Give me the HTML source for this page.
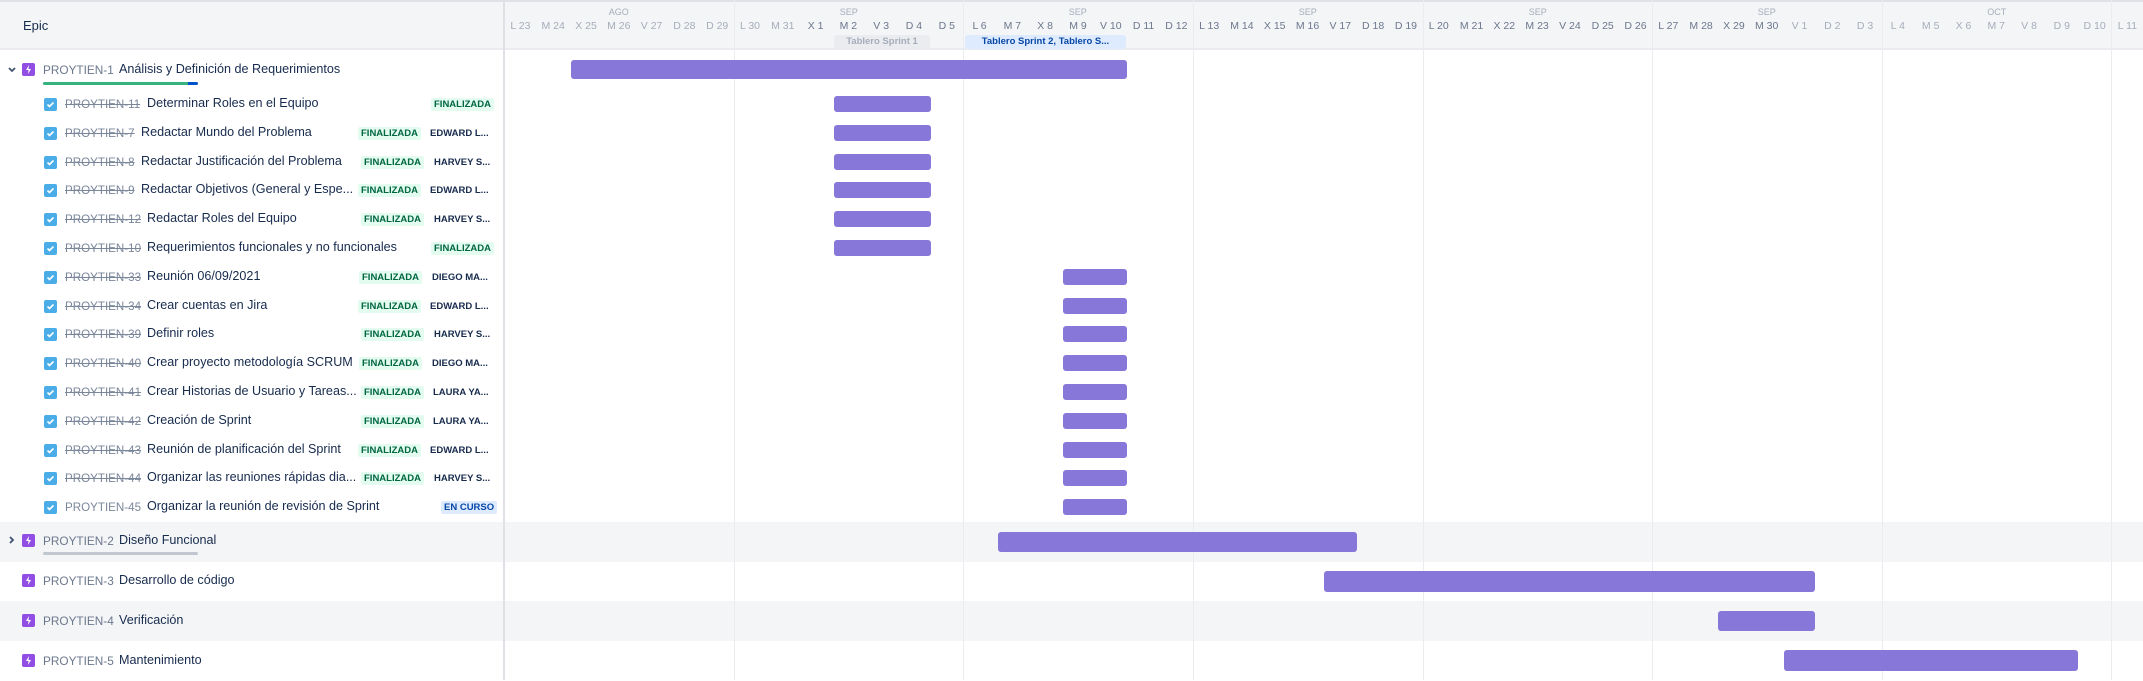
<!DOCTYPE html>
<html><head><meta charset="utf-8">
<style>
*{box-sizing:border-box;margin:0;padding:0}
body{width:2143px;height:680px;overflow:hidden;background:#fff;font-family:"Liberation Sans",sans-serif;color:#172b4d;position:relative}
.a{position:absolute}
.hdr{left:0;top:0;width:2143px;height:50px;background:#f4f5f7;border-top:2px solid #dfe1e6;border-bottom:2px solid #ebecf0}
.side{left:503px;top:0;width:2px;height:680px;background:#dfe1e6}
.vl{top:0;width:1px;height:680px;background:#ebecf0}
.grey{left:0;width:2143px;background:#f4f5f7}
.days{left:504px;top:20px;display:flex;font-size:10.5px;white-space:nowrap}
.days span{width:32.8px;text-align:center;flex:none}
.l{color:#a5adba}.d{color:#6b778c}
.mon{top:7px;font-size:9px;color:#a5adba;width:229.6px;text-align:center}
.bar{background:#8777d9;border-radius:3px}
.row{left:0;width:503px;height:28.8px;font-size:12.6px}
.cb{position:absolute;left:44px;top:8px;width:13px;height:13px;background:#4bade8;border-radius:2px}
.cb svg{position:absolute;left:2px;top:2px}
.key{position:absolute;left:65px;top:8px;font-size:11.6px;color:#7a869a;text-decoration:line-through}
.key.n{text-decoration:none}
.sum{position:absolute;top:6px;color:#172b4d;white-space:nowrap}
.loz{position:absolute;top:8px;height:13px;line-height:13px;font-size:9.5px;font-weight:bold;background:#e3fcef;color:#006644;padding:0 3px;border-radius:2px}
.as{position:absolute;left:430px;top:8px;font-size:9.5px;font-weight:bold;color:#172b4d;line-height:13px}
.ep{position:absolute;left:22px;width:13px;height:13px;background:#904ee2;border-radius:2px}
.ep svg{position:absolute;left:3px;top:2px}
.ekey{position:absolute;left:43px;font-size:11.8px;color:#6b778c}
.etxt{position:absolute;font-size:12.6px;color:#172b4d}
</style></head><body>
<div class="a hdr"></div>
<div class="a" style="left:23px;top:18px;font-size:13px;color:#172b4d">Epic</div>

<div class="a grey" style="top:522px;height:40px"></div>
<div class="a grey" style="top:601px;height:40px"></div>

<div class="a vl" style="left:734px"></div>
<div class="a vl" style="left:963px"></div>
<div class="a vl" style="left:1193px"></div>
<div class="a vl" style="left:1423px"></div>
<div class="a vl" style="left:1652px"></div>
<div class="a vl" style="left:1882px"></div>
<div class="a vl" style="left:2111px"></div>
<div class="a side"></div>

<div class="a mon" style="left:504px">AGO</div>
<div class="a mon" style="left:734px">SEP</div>
<div class="a mon" style="left:963px">SEP</div>
<div class="a mon" style="left:1193px">SEP</div>
<div class="a mon" style="left:1423px">SEP</div>
<div class="a mon" style="left:1652px">SEP</div>
<div class="a mon" style="left:1882px">OCT</div>

<div class="a days">
<span class="l">L 23</span><span class="l">M 24</span><span class="l">X 25</span><span class="l">M 26</span><span class="l">V 27</span><span class="l">D 28</span><span class="l">D 29</span>
<span class="l">L 30</span><span class="l">M 31</span><span class="d">X 1</span><span class="d">M 2</span><span class="d">V 3</span><span class="d">D 4</span><span class="d">D 5</span>
<span class="d">L 6</span><span class="d">M 7</span><span class="d">X 8</span><span class="d">M 9</span><span class="d">V 10</span><span class="d">D 11</span><span class="d">D 12</span>
<span class="d">L 13</span><span class="d">M 14</span><span class="d">X 15</span><span class="d">M 16</span><span class="d">V 17</span><span class="d">D 18</span><span class="d">D 19</span>
<span class="d">L 20</span><span class="d">M 21</span><span class="d">X 22</span><span class="d">M 23</span><span class="d">V 24</span><span class="d">D 25</span><span class="d">D 26</span>
<span class="d">L 27</span><span class="d">M 28</span><span class="d">X 29</span><span class="d">M 30</span><span class="l">V 1</span><span class="l">D 2</span><span class="l">D 3</span>
<span class="l">L 4</span><span class="l">M 5</span><span class="l">X 6</span><span class="l">M 7</span><span class="l">V 8</span><span class="l">D 9</span><span class="l">D 10</span>
<span class="l">L 11</span>
</div>

<div class="a" style="left:834px;top:35px;width:96px;height:14px;background:#ebecf0;border-radius:3px;color:#a5adba;font-size:9.5px;font-weight:bold;text-align:center;line-height:14px">Tablero Sprint 1</div>
<div class="a" style="left:965px;top:35px;width:161px;height:14px;background:#deebff;border-radius:3px;color:#0747a6;font-size:9.5px;font-weight:bold;text-align:center;line-height:14px">Tablero Sprint 2, Tablero S...</div>

<div class="a" style="left:0;top:50px;width:503px;height:40px">
<svg class="a" style="left:8px;top:17px" width="8" height="6" viewBox="0 0 8 6"><path d="M1 1l3 3 3-3" stroke="#42526e" stroke-width="1.8" fill="none"/></svg>
<div class="ep" style="top:13px"><svg width="7" height="9" viewBox="0 0 7 9"><path d="M4 0L1 5h2.5L3 9l3-5H3.5z" fill="#fff"/></svg></div>
<div class="ekey" style="top:13px">PROYTIEN-1</div>
<div class="etxt" style="left:119px;top:12px">Análisis y Definición de Requerimientos</div>
<div class="a" style="left:43px;top:32px;width:145px;height:3px;background:#36b37e;border-radius:2px 0 0 2px"></div>
<div class="a" style="left:188px;top:32px;width:10px;height:3px;background:#0052cc;border-radius:0 2px 2px 0"></div>
</div>

<div class="a row" style="top:90px"><div class="cb"><svg width="9" height="9" viewBox="0 0 9 9"><path d="M1.5 4.5l2 2 4-4" stroke="#fff" stroke-width="1.6" fill="none"/></svg></div><span class="key">PROYTIEN-11</span><span class="sum" style="left:147px">Determinar Roles en el Equipo</span><span class="loz" style="left:431px">FINALIZADA</span></div>
<div class="a row" style="top:118.8px"><div class="cb"><svg width="9" height="9" viewBox="0 0 9 9"><path d="M1.5 4.5l2 2 4-4" stroke="#fff" stroke-width="1.6" fill="none"/></svg></div><span class="key">PROYTIEN-7</span><span class="sum" style="left:141px">Redactar Mundo del Problema</span><span class="loz" style="left:358px">FINALIZADA</span><span class="as">EDWARD L...</span></div>
<div class="a row" style="top:147.6px"><div class="cb"><svg width="9" height="9" viewBox="0 0 9 9"><path d="M1.5 4.5l2 2 4-4" stroke="#fff" stroke-width="1.6" fill="none"/></svg></div><span class="key">PROYTIEN-8</span><span class="sum" style="left:141px">Redactar Justificación del Problema</span><span class="loz" style="left:361px">FINALIZADA</span><span class="as" style="left:434px">HARVEY S...</span></div>
<div class="a row" style="top:176.4px"><div class="cb"><svg width="9" height="9" viewBox="0 0 9 9"><path d="M1.5 4.5l2 2 4-4" stroke="#fff" stroke-width="1.6" fill="none"/></svg></div><span class="key">PROYTIEN-9</span><span class="sum" style="left:141px">Redactar Objetivos (General y Espe...</span><span class="loz" style="left:358px">FINALIZADA</span><span class="as">EDWARD L...</span></div>
<div class="a row" style="top:205.2px"><div class="cb"><svg width="9" height="9" viewBox="0 0 9 9"><path d="M1.5 4.5l2 2 4-4" stroke="#fff" stroke-width="1.6" fill="none"/></svg></div><span class="key">PROYTIEN-12</span><span class="sum" style="left:147px">Redactar Roles del Equipo</span><span class="loz" style="left:361px">FINALIZADA</span><span class="as" style="left:434px">HARVEY S...</span></div>
<div class="a row" style="top:234px"><div class="cb"><svg width="9" height="9" viewBox="0 0 9 9"><path d="M1.5 4.5l2 2 4-4" stroke="#fff" stroke-width="1.6" fill="none"/></svg></div><span class="key">PROYTIEN-10</span><span class="sum" style="left:147px">Requerimientos funcionales y no funcionales</span><span class="loz" style="left:431px">FINALIZADA</span></div>
<div class="a row" style="top:262.8px"><div class="cb"><svg width="9" height="9" viewBox="0 0 9 9"><path d="M1.5 4.5l2 2 4-4" stroke="#fff" stroke-width="1.6" fill="none"/></svg></div><span class="key">PROYTIEN-33</span><span class="sum" style="left:147px">Reunión 06/09/2021</span><span class="loz" style="left:359px">FINALIZADA</span><span class="as" style="left:432px">DIEGO MA...</span></div>
<div class="a row" style="top:291.6px"><div class="cb"><svg width="9" height="9" viewBox="0 0 9 9"><path d="M1.5 4.5l2 2 4-4" stroke="#fff" stroke-width="1.6" fill="none"/></svg></div><span class="key">PROYTIEN-34</span><span class="sum" style="left:147px">Crear cuentas en Jira</span><span class="loz" style="left:358px">FINALIZADA</span><span class="as">EDWARD L...</span></div>
<div class="a row" style="top:320.4px"><div class="cb"><svg width="9" height="9" viewBox="0 0 9 9"><path d="M1.5 4.5l2 2 4-4" stroke="#fff" stroke-width="1.6" fill="none"/></svg></div><span class="key">PROYTIEN-39</span><span class="sum" style="left:147px">Definir roles</span><span class="loz" style="left:361px">FINALIZADA</span><span class="as" style="left:434px">HARVEY S...</span></div>
<div class="a row" style="top:349.2px"><div class="cb"><svg width="9" height="9" viewBox="0 0 9 9"><path d="M1.5 4.5l2 2 4-4" stroke="#fff" stroke-width="1.6" fill="none"/></svg></div><span class="key">PROYTIEN-40</span><span class="sum" style="left:147px">Crear proyecto metodología SCRUM</span><span class="loz" style="left:359px">FINALIZADA</span><span class="as" style="left:432px">DIEGO MA...</span></div>
<div class="a row" style="top:378px"><div class="cb"><svg width="9" height="9" viewBox="0 0 9 9"><path d="M1.5 4.5l2 2 4-4" stroke="#fff" stroke-width="1.6" fill="none"/></svg></div><span class="key">PROYTIEN-41</span><span class="sum" style="left:147px">Crear Historias de Usuario y Tareas...</span><span class="loz" style="left:361px">FINALIZADA</span><span class="as" style="left:433px">LAURA YA...</span></div>
<div class="a row" style="top:406.8px"><div class="cb"><svg width="9" height="9" viewBox="0 0 9 9"><path d="M1.5 4.5l2 2 4-4" stroke="#fff" stroke-width="1.6" fill="none"/></svg></div><span class="key">PROYTIEN-42</span><span class="sum" style="left:147px">Creación de Sprint</span><span class="loz" style="left:361px">FINALIZADA</span><span class="as" style="left:433px">LAURA YA...</span></div>
<div class="a row" style="top:435.6px"><div class="cb"><svg width="9" height="9" viewBox="0 0 9 9"><path d="M1.5 4.5l2 2 4-4" stroke="#fff" stroke-width="1.6" fill="none"/></svg></div><span class="key">PROYTIEN-43</span><span class="sum" style="left:147px">Reunión de planificación del Sprint</span><span class="loz" style="left:358px">FINALIZADA</span><span class="as">EDWARD L...</span></div>
<div class="a row" style="top:464.4px"><div class="cb"><svg width="9" height="9" viewBox="0 0 9 9"><path d="M1.5 4.5l2 2 4-4" stroke="#fff" stroke-width="1.6" fill="none"/></svg></div><span class="key">PROYTIEN-44</span><span class="sum" style="left:147px">Organizar las reuniones rápidas dia...</span><span class="loz" style="left:361px">FINALIZADA</span><span class="as" style="left:434px">HARVEY S...</span></div>
<div class="a row" style="top:493.2px"><div class="cb"><svg width="9" height="9" viewBox="0 0 9 9"><path d="M1.5 4.5l2 2 4-4" stroke="#fff" stroke-width="1.6" fill="none"/></svg></div><span class="key n">PROYTIEN-45</span><span class="sum" style="left:147px">Organizar la reunión de revisión de Sprint</span><span class="loz" style="left:441px;background:#deebff;color:#0747a6">EN CURSO</span></div>

<div class="a" style="left:0;top:522px;width:503px;height:40px">
<svg class="a" style="left:9px;top:14px" width="6" height="8" viewBox="0 0 6 8"><path d="M1 1l3 3-3 3" stroke="#42526e" stroke-width="1.8" fill="none"/></svg>
<div class="ep" style="top:12px"><svg width="7" height="9" viewBox="0 0 7 9"><path d="M4 0L1 5h2.5L3 9l3-5H3.5z" fill="#fff"/></svg></div>
<div class="ekey" style="top:12px">PROYTIEN-2</div>
<div class="etxt" style="left:119px;top:11px">Diseño Funcional</div>
<div class="a" style="left:43px;top:30px;width:155px;height:3px;background:#c1c7d0;border-radius:2px"></div>
</div>
<div class="a" style="left:0;top:561px;width:503px;height:40px">
<div class="ep" style="top:13px"><svg width="7" height="9" viewBox="0 0 7 9"><path d="M4 0L1 5h2.5L3 9l3-5H3.5z" fill="#fff"/></svg></div>
<div class="ekey" style="top:13px">PROYTIEN-3</div>
<div class="etxt" style="left:119px;top:12px">Desarrollo de código</div>
</div>
<div class="a" style="left:0;top:601px;width:503px;height:40px">
<div class="ep" style="top:13px"><svg width="7" height="9" viewBox="0 0 7 9"><path d="M4 0L1 5h2.5L3 9l3-5H3.5z" fill="#fff"/></svg></div>
<div class="ekey" style="top:13px">PROYTIEN-4</div>
<div class="etxt" style="left:119px;top:12px">Verificación</div>
</div>
<div class="a" style="left:0;top:641px;width:503px;height:40px">
<div class="ep" style="top:13px"><svg width="7" height="9" viewBox="0 0 7 9"><path d="M4 0L1 5h2.5L3 9l3-5H3.5z" fill="#fff"/></svg></div>
<div class="ekey" style="top:13px">PROYTIEN-5</div>
<div class="etxt" style="left:119px;top:12px">Mantenimiento</div>
</div>

<div class="a bar" style="left:571px;top:60px;width:556px;height:19px"></div>
<div class="a bar" style="left:834px;top:96px;width:97px;height:16px"></div>
<div class="a bar" style="left:834px;top:125px;width:97px;height:16px"></div>
<div class="a bar" style="left:834px;top:154px;width:97px;height:16px"></div>
<div class="a bar" style="left:834px;top:182px;width:97px;height:16px"></div>
<div class="a bar" style="left:834px;top:211px;width:97px;height:16px"></div>
<div class="a bar" style="left:834px;top:240px;width:97px;height:16px"></div>
<div class="a bar" style="left:1063px;top:269px;width:64px;height:16px"></div>
<div class="a bar" style="left:1063px;top:298px;width:64px;height:16px"></div>
<div class="a bar" style="left:1063px;top:326px;width:64px;height:16px"></div>
<div class="a bar" style="left:1063px;top:355px;width:64px;height:16px"></div>
<div class="a bar" style="left:1063px;top:384px;width:64px;height:16px"></div>
<div class="a bar" style="left:1063px;top:413px;width:64px;height:16px"></div>
<div class="a bar" style="left:1063px;top:442px;width:64px;height:16px"></div>
<div class="a bar" style="left:1063px;top:470px;width:64px;height:16px"></div>
<div class="a bar" style="left:1063px;top:499px;width:64px;height:16px"></div>
<div class="a bar" style="left:998px;top:532px;width:359px;height:20px"></div>
<div class="a bar" style="left:1324px;top:571px;width:491px;height:21px"></div>
<div class="a bar" style="left:1718px;top:611px;width:97px;height:20px"></div>
<div class="a bar" style="left:1784px;top:650px;width:294px;height:21px"></div>
</body></html>
